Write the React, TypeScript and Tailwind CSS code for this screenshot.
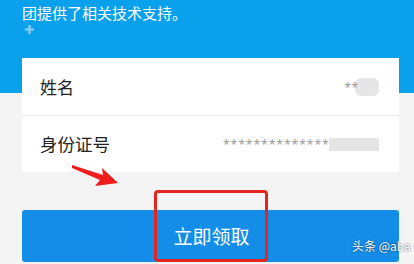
import React from "react";

export default function App() {
  return (
    <div
      className="relative w-[414px] h-[264px] overflow-hidden bg-[#f4f4f4]"
      style={{ fontFamily: '"Noto Sans CJK SC", "Noto Sans", sans-serif' }}
    >
      <div className="h-[93px] bg-[#09a0ec] pl-[22px] pt-[2px]">
        <div className="text-[15px] leading-[22px] text-white">团提供了相关技术支持。</div>
        <svg className="ml-[3px] mt-[1px]" width="9" height="9" viewBox="0 0 9 9">
          <path d="M3.2 0 H5.8 V3.2 H9 V5.8 H5.8 V9 H3.2 V5.8 H0 V3.2 H3.2 Z" fill="#7fc9f3" />
        </svg>
      </div>
      <div className="px-[22px] pr-[15px] mt-[-35px]">
        <div className="bg-white">
          <div className="h-[58px] flex items-center justify-between pl-[18px] pr-[20px] border-b border-[#e6e6e6]">
            <span className="text-[17px] text-[#222]">姓名</span>
            <div className="flex items-center">
              <span
                className="text-[16px] leading-[16px] text-[#a0a0a0] tracking-[1px] translate-y-[2px]"
                style={{ fontFamily: '"Liberation Sans", sans-serif' }}
              >
                **
              </span>
              <div className="w-[24px] h-[18px] bg-[#e6e6e6] rounded-[6px] ml-[-4px]" />
            </div>
          </div>
          <div className="h-[56px] flex items-center justify-between pl-[18px] pr-[20px]">
            <span className="text-[17.5px] text-[#222]">身份证号</span>
            <div className="flex items-center">
              <span
                className="text-[16px] leading-[16px] text-[#a0a0a0] tracking-[1.4px] translate-y-[2px]"
                style={{ fontFamily: '"Liberation Sans", sans-serif' }}
              >
                **************
              </span>
              <div className="w-[50px] h-[13px] bg-[#e5e5e5] ml-[-1px]" />
            </div>
          </div>
        </div>
        <div className="mt-[38px] h-[52px] rounded-[3px] bg-[#148de8] flex items-center justify-center">
          <span className="text-[19px] text-white pl-[2px]">立即领取</span>
        </div>
      </div>
      <svg className="absolute left-[70px] top-[160px]" width="55" height="30" viewBox="0 0 55 30">
        <path d="M2 5 L33 15 L32 8 L48 23 L25 26 L30 20 L2 8 Z" fill="#f01c1c" />
      </svg>
      <div className="absolute left-[154px] top-[190px] w-[114px] h-[72px] border-[3px] border-[#e3261f] rounded-[4px]" />
      <div
        className="absolute left-[352px] top-[237px] text-[12px] text-white"
        style={{ textShadow: "0 0 2px rgba(0,0,0,0.7)" }}
      >
        头条 @aba
      </div>
    </div>
  );
}
